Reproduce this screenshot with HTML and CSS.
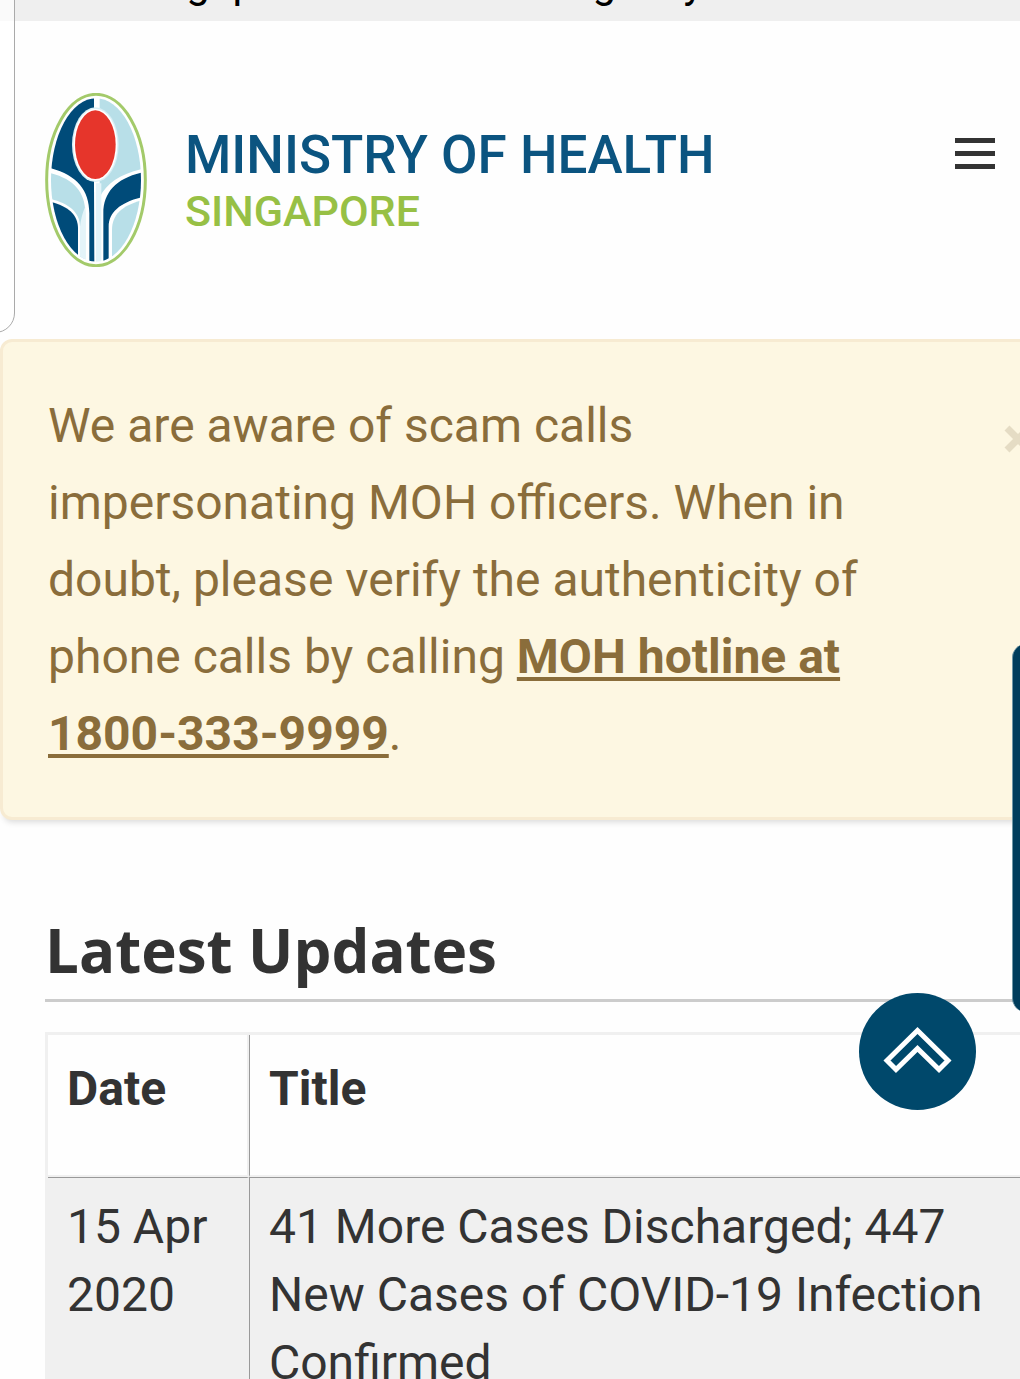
FILE: index.html
```html
<!DOCTYPE html>
<html lang="en">

<head>
    <meta charset="UTF-8">
    <meta name="viewport" content="width=device-width, initial-scale=1.0">
    <title>MOH | Latest Updates</title>
    <link rel="stylesheet" href="styles.css">
</head>

<body>
    <div class="govbar">
        <span>A Singapore Government Agency Website</span>
    </div>

    <header class="header">
        <a class="logo" href="#">
            <svg class="logo-mark" viewBox="45 39 306 522" aria-hidden="true">
                <defs>
                    <clipPath id="oval">
                        <ellipse cx="198" cy="300" rx="135" ry="245" />
                    </clipPath>
                </defs>
                <ellipse cx="198" cy="300" rx="148" ry="257" fill="#fff" stroke="#a3ca6a" stroke-width="9" />
                <g clip-path="url(#oval)">
                    <!-- leaves -->
                    <path fill="#004b79" d="M192 50V310L193 545H178V400C178 330 140 285 60 264V50Z" />
                    <path fill="#b8dfe8" d="M209 50V352C230 308 275 280 340 266V50Z" />
                    <path fill="#b8dfe8" d="M55 278C130 295 166 335 166 400V550H150V440C150 392 110 368 55 355Z" />
                    <path fill="#004b79" d="M55 364C110 375 144 402 144 445V550H55Z" />
                    <path fill="#e4f4f9" d="M150 440C155 400 166 380 166 380V550H150ZM198 310H214V550H198Z" />
                    <path fill="#004b79" d="M345 276C262 292 220 335 220 400V545H236V440C236 395 275 364 345 350Z" />
                    <path fill="#b8dfe8" d="M345 358C280 374 246 400 246 450V550H345Z" />
                    <!-- head -->
                    <ellipse cx="196" cy="194" rx="70" ry="112" fill="#d9eff5" />
                    <ellipse cx="196" cy="194" rx="66" ry="108" fill="#fff" />
                    <ellipse cx="196" cy="194" rx="61" ry="103" fill="#e6352b" />
                </g>
            </svg>
            <span class="logo-text">
                <span class="logo-name">MINISTRY OF HEALTH</span>
                <span class="logo-country">SINGAPORE</span>
            </span>
        </a>
        <button class="menu" type="button" aria-label="Menu">
            <i></i>
            <i></i>
            <i></i>
        </button>
        <div class="sidebox"></div>
    </header>

    <div class="alert" role="alert">
        <p>We are aware of scam calls impersonating MOH officers. When in doubt, please verify the authenticity of phone calls by calling <a href="tel:18003339999">MOH hotline at 1800-333-9999</a>.</p>
        <button class="alert-close" type="button" aria-label="Close">
            <svg viewBox="0 0 28 28" aria-hidden="true">
                <path d="M3 3L25 25M25 3L3 25" />
            </svg>
        </button>
    </div>

    <main class="updates">
        <h2>Latest Updates</h2>
        <table>
            <thead>
                <tr>
                    <th class="date">Date</th>
                    <th class="title">Title</th>
                </tr>
            </thead>
            <tbody>
                <tr>
                    <td class="date">15 Apr 2020</td>
                    <td class="title">41 More Cases Discharged; 447 New Cases of COVID-19 Infection Confirmed</td>
                </tr>
            </tbody>
        </table>
    </main>

    <button class="sidetab" type="button" aria-label="Feedback"></button>
    <a class="totop" href="#" aria-label="Back to top">
        <svg viewBox="0 0 117 117" aria-hidden="true">
            <path d="M58.500 37.500L28 67.500L37 76.500L58.500 55.500L80 76.500L89 67.500Z" />
        </svg>
    </a>
</body>

</html>
```

FILE: styles.css
```css
* {
    margin: 0;
    padding: 0;
    box-sizing: border-box;
}

html {
    overflow: hidden;
}

body {
    font-family: Roboto, "Liberation Sans", sans-serif;
    font-size: 48px;
    color: #333;
    background-color: #fefefe;
    overflow: hidden;
}

button {
    border: none;
    background: none;
    cursor: pointer;
}

.govbar {
    display: flex;
    align-items: flex-end;
    height: 21px;
    padding: 0 45px 14px 90px;
    font-size: 42px;
    line-height: 48px;
    color: #000;
    background-color: #efefef;
    white-space: nowrap;
    overflow: hidden;
}

/* header */
.header {
    position: relative;
    display: flex;
    align-items: flex-start;
    justify-content: space-between;
    padding: 72px 25px 72px 45px;
}

.logo {
    display: flex;
    gap: 38px;
    text-decoration: none;
}

.logo-mark {
    display: block;
    width: 102px;
    height: 174px;
}

.logo-text {
    display: flex;
    flex-direction: column;
    gap: 4px;
    padding-top: 36px;
    font-weight: 500;
    line-height: 52px;
    white-space: nowrap;
}

.logo-name {
    font-size: 53px;
    color: #0b5480;
}

.logo-country {
    font-size: 43px;
    color: #97c045;
}

.menu {
    display: flex;
    flex-direction: column;
    gap: 8px;
    width: 40px;
    margin-top: 45px;
}

.menu i {
    width: 100%;
    height: 5px;
    background-color: #333;
}

/* panel edge peeking in at the left */
.sidebox {
    position: absolute;
    left: -45px;
    bottom: 6px;
    width: 60px;
    height: 400px;
    background-color: rgba(255, 255, 255, 0.7);
    border: 1px solid #aaa;
    border-radius: 20px;
}

/* scam notice */
.alert {
    display: flex;
    align-items: flex-start;
    gap: 100px;
    margin-right: -60px;
    padding: 45px;
    line-height: 77px;
    color: #8a6d3b;
    background-color: #fdf7e2;
    border: 3px solid #f7ebd2;
    border-radius: 12px;
    box-shadow: 0 6px 6px -4px rgba(0, 0, 0, 0.15);
}

.alert p {
    flex: 1;
}

.alert a {
    font-weight: bold;
    color: #8a6d3b;
    text-decoration-thickness: 4px;
    text-underline-offset: 4px;
}

.alert-close {
    width: 28px;
    height: 28px;
    margin-top: 38px;
}

.alert-close svg {
    display: block;
    fill: none;
    stroke: #e5dcc4;
    stroke-width: 7;
}

/* latest updates */
.updates {
    padding: 88px 0 0 45px;
}

.updates h2 {
    margin-bottom: 30px;
    padding-bottom: 7px;
    font-family: "Open Sans", "Noto Sans", sans-serif;
    font-size: 60px;
    line-height: 84px;
    border-bottom: 3px solid #ccc;
}

table {
    width: 100%;
    border: 3px solid #f0f0f0;
    border-right: none;
    border-spacing: 0;
    line-height: 68px;
}

th,
td {
    text-align: left;
    vertical-align: top;
}

th {
    height: 142px;
    padding: 20px 19px 0;
    border-bottom: 2px solid #f0f0f0;
}

td {
    padding: 15px 19px 68px;
    background-color: #f0f0f0;
    border-top: 1px solid #999;
}

.date {
    width: 201px;
    border-right: 2px solid #f0f0f0;
}

.title {
    border-left: 1px solid #999;
}

/* floating controls */
.sidetab {
    position: fixed;
    top: 644px;
    right: -32px;
    width: 40px;
    height: 368px;
    background-color: #003d5c;
    border-left: 1px solid #6f96a5;
    border-radius: 14px;
}

.totop {
    position: fixed;
    right: 44px;
    bottom: 269px;
    width: 117px;
    height: 117px;
    background-color: #00486b;
    border-radius: 50%;
}

.totop svg {
    display: block;
    fill: none;
    stroke: #fff;
    stroke-width: 5;
}
```
